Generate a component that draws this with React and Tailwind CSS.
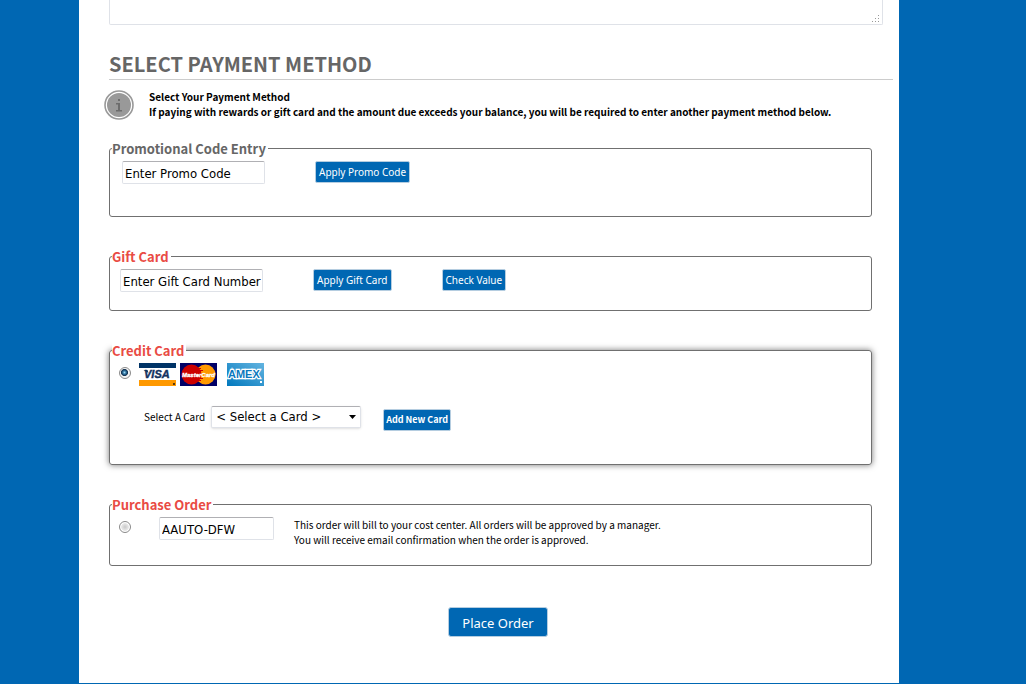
import React from "react";

const heading = "font-['Noto_Sans_CJK_SC',sans-serif]";
const field =
  "h-[23px] rounded-[2px] border border-[#dfe2e8] border-t-[#b0b0b4] bg-white pl-0.5 pt-0.5 font-['DejaVu_Sans_Condensed',sans-serif] text-[13px] leading-[20px] text-black outline-none";
const smallButton =
  "h-[22px] shrink-0 whitespace-nowrap rounded-[2px] border border-[#b5cde0] bg-[#0067b3] leading-[18px] text-white";
const plainButton = "px-[3px] font-['Noto_Sans',sans-serif] text-[10px]";

function Panel({ title, red, className = "", children }) {
  return (
    <fieldset className={`w-full rounded-[3px] border border-[#707070] pl-2 ${className}`}>
      <legend
        className={`-ml-1.5 bg-white pr-0.5 text-[13px] font-bold leading-[17px] ${heading} ${
          red ? "text-[#e94b44]" : "text-[#666666]"
        }`}
      >
        {title}
      </legend>
      {children}
    </fieldset>
  );
}

function InfoIcon() {
  return (
    <svg className="h-[30px] w-[30px] shrink-0" viewBox="0 0 30 30" aria-hidden="true">
      <circle cx="15" cy="15" r="14" fill="#fff" stroke="#999" strokeWidth="1.6" />
      <circle cx="15" cy="15" r="12" fill="#999" />
      <path d="M14 9h2v2h-2zM12 13h4v7h2v1.500h-6v-1.500h2v-5.500h-2z" fill="#6c6c6c" />
    </svg>
  );
}

function Visa() {
  return (
    <svg className="h-[23px] w-[37px]" viewBox="0 0 37 23" role="img" aria-label="Visa">
      <rect width="37" height="23" fill="#fff" />
      <rect width="37" height="5" fill="#003366" />
      <rect y="17" width="37" height="6" fill="#ff9900" />
      <text x="5" y="15" fontSize="11" fontWeight="bold" fontStyle="italic" fontFamily="Liberation Sans, sans-serif" fill="#12325f" stroke="#12325f" strokeWidth="0.4">
        VISA
      </text>
      <path d="M4.500 7h4l1 3z" fill="#12325f" />
      <rect x="34" y="20" width="2" height="2" fill="#5a3b10" />
    </svg>
  );
}

function MasterCard() {
  return (
    <svg className="h-[23px] w-[37px]" viewBox="0 0 37 23" role="img" aria-label="MasterCard">
      <rect width="37" height="23" fill="#000066" />
      <circle cx="25.500" cy="11.500" r="10" fill="#ff9900" />
      <circle cx="11.500" cy="11.500" r="10" fill="#cc0000" />
      <path d="M17 5.500h4M17 7.500h6M17 15.500h6M17 17.500h4" stroke="#cc0000" />
      <text x="2" y="14" fontSize="6" fontWeight="bold" fontStyle="italic" fontFamily="Liberation Sans, sans-serif" fill="#fff" stroke="#fff" strokeWidth="0.3">
        MasterCard
      </text>
    </svg>
  );
}

function Amex() {
  return (
    <svg className="h-[23px] w-[37px]" viewBox="0 0 37 23" role="img" aria-label="American Express">
      <defs>
        <linearGradient id="amex" x1="0" y1="1" x2="1" y2="0">
          <stop offset="0" stopColor="#0078bd" />
          <stop offset="1" stopColor="#63b4e0" />
        </linearGradient>
      </defs>
      <rect width="37" height="23" fill="url(#amex)" />
      <text
        x="1"
        y="15"
        fontSize="11"
        fontWeight="bold"
        fontFamily="Liberation Sans, sans-serif"
        fill="#0a78bd"
        stroke="#fff"
        strokeWidth="2.4"
        paintOrder="stroke"
      >
        AMEX
      </text>
      <rect x="33" y="18" width="2" height="2" fill="#fff" />
    </svg>
  );
}

function Radio({ label, ...props }) {
  return (
    <input
      type="radio"
      name="payment"
      aria-label={label}
      className="mt-1 h-3 w-3 shrink-0 appearance-none rounded-full border border-[#8a8a8a] bg-[radial-gradient(circle,#c8c8c8_0,#e8e8e8_50%,#ffffff_60%)] checked:bg-[radial-gradient(circle_at_45%_45%,#9fd8f2_0,#2a6f9c_22%,#12304f_40%,#f4f4f4_50%)]"
      {...props}
    />
  );
}

export default function App() {
  return (
    <div className="min-h-screen bg-[#0067b3] pb-px pl-[79px] text-black">
      <main className={`w-full max-w-[820px] bg-white pb-[46px] pl-[30px] pr-1.5 ${heading}`}>
        <div className="pr-2.5">
          <div className="relative">
            <textarea
              aria-label="Order comments"
              className="block h-[25px] w-full resize-none rounded-b-[2px] border border-t-0 border-[#dfe2e8] bg-white outline-none"
            />
            <svg className="absolute bottom-[2px] right-[3px] h-2 w-2" viewBox="0 0 8 8" fill="#999" aria-hidden="true">
              <path d="M6 0h1v1h-1zM3 3h1v1h-1zM6 3h1v1h-1zM0 6h1v1h-1zM3 6h1v1h-1zM6 6h1v1h-1z" />
            </svg>
          </div>
        </div>

        <h1 className="mt-6 border-b border-[#cccccc] pb-px text-[20px] font-bold leading-[29px] text-[#666666]">
          SELECT PAYMENT METHOD
        </h1>

        <div className="-ml-[5px] mt-[9px] flex gap-[15px]">
          <div className="pt-px">
            <InfoIcon />
          </div>
          <p className="text-[10px] font-bold leading-[15px]">
            Select Your Payment Method
            <br />
            If paying with rewards or gift card and the amount due exceeds your balance, you will be required to enter
            another payment method below.
          </p>
        </div>

        <form className="flex flex-col pr-[21px] pt-5" onSubmit={(e) => e.preventDefault()}>
          <Panel title="Promotional Code Entry" className="h-[77px]">
            <div className="flex items-start gap-[50px] pl-1 pt-1">
              <input aria-label="Promo code" defaultValue="Enter Promo Code" className={`${field} w-[143px]`} />
              <button type="button" className={`${smallButton} ${plainButton}`}>Apply Promo Code</button>
            </div>
          </Panel>

          <Panel title="Gift Card" red className="mt-[31px] h-[63px]">
            <div className="flex items-start pl-0.5 pt-1">
              <input aria-label="Gift card number" defaultValue="Enter Gift Card Number" className={`${field} w-[143px]`} />
              <button type="button" className={`${smallButton} ${plainButton} ml-[50px]`}>Apply Gift Card</button>
              <button type="button" className={`${smallButton} ${plainButton} ml-[50px]`}>Check Value</button>
            </div>
          </Panel>

          <Panel title="Credit Card" red className="mt-[31px] h-[123px] shadow-[0_0_6px_#777777]">
            <div className="flex items-start pl-px pt-1">
              <Radio label="Credit card" defaultChecked />
              <div className="ml-2 flex">
                <Visa />
                <span className="ml-1"><MasterCard /></span>
                <span className="ml-2.5"><Amex /></span>
              </div>
            </div>
            <div className="flex items-start pl-[26px] pt-5">
              <label htmlFor="card" className="pt-[3px] text-[10px] leading-[15px]">Select A Card</label>
              <div className="relative ml-1.5">
                <select
                  id="card"
                  className="block h-[22px] w-[150px] appearance-none rounded-[2px] border border-[#dfe2e8] border-t-[#b0b0b4] bg-white px-1 font-['DejaVu_Sans_Condensed',sans-serif] text-[13px] leading-[20px] shadow-sm"
                >
                  <option>&lt; Select a Card &gt;</option>
                </select>
                <svg className="pointer-events-none absolute right-[5px] top-[9px] h-1 w-[7px]" viewBox="0 0 7 4" aria-hidden="true">
                  <path d="M0 0h7L3.500 4z" />
                </svg>
              </div>
              <button type="button" className={`${smallButton} ml-[22px] mt-[3px] px-0.5 text-[9px] font-bold`}>Add New Card</button>
            </div>
          </Panel>

          <Panel title="Purchase Order" red className="mt-[31px] h-[70px]">
            <div className="flex items-start pl-px pt-1">
              <Radio label="Purchase order" />
              <input aria-label="Purchase order number" defaultValue="AAUTO-DFW" className={`${field} ml-7 w-[115px]`} />
              <p className="ml-5 text-[10px] leading-[15px]">
                This order will bill to your cost center. All orders will be approved by a manager.
                <br />
                You will receive email confirmation when the order is approved.
              </p>
            </div>
          </Panel>

          <button
            type="submit"
            className="ml-[339px] mt-[41px] h-[30px] w-[100px] rounded-[3px] border border-[#b5cde0] bg-[#0067b3] pt-px font-['Noto_Sans',sans-serif] text-[13px] leading-[26px] text-white"
          >
            Place Order
          </button>
        </form>
      </main>
    </div>
  );
}
